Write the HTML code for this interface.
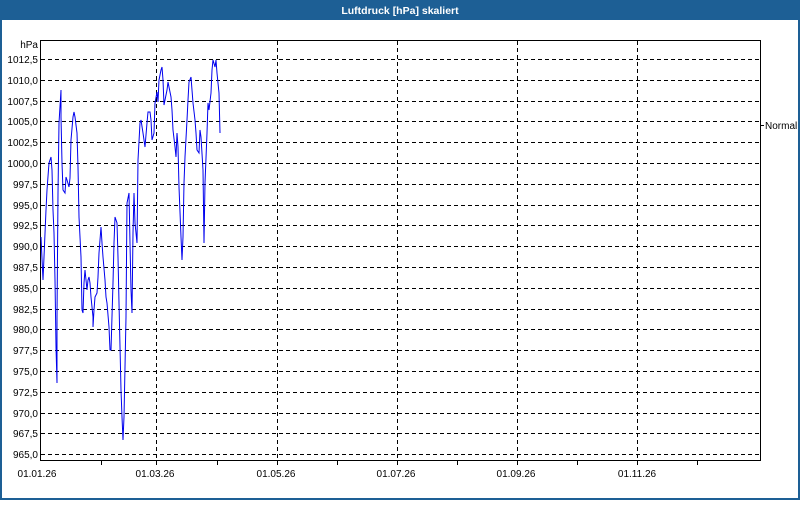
<!DOCTYPE html>
<html><head><style>
body{margin:0;width:800px;height:500px;overflow:hidden;background:#fff;font-family:"Liberation Sans",sans-serif}
</style></head><body>
<svg width="800" height="500" xmlns="http://www.w3.org/2000/svg" font-family="Liberation Sans, sans-serif" font-size="10">
<rect x="0" y="0" width="800" height="500" fill="#1d5f95"/>
<rect x="2" y="20" width="796" height="478" fill="#fff"/>
<text x="400" y="14" fill="#fff" font-weight="bold" font-size="10.5" text-anchor="middle">Luftdruck [hPa] skaliert</text>
<g stroke="#000" stroke-dasharray="4,3" stroke-width="1">
<line x1="41" x2="760" y1="59.5" y2="59.5"/><line x1="41" x2="760" y1="80.5" y2="80.5"/><line x1="41" x2="760" y1="101.5" y2="101.5"/><line x1="41" x2="760" y1="121.5" y2="121.5"/><line x1="41" x2="760" y1="142.5" y2="142.5"/><line x1="41" x2="760" y1="163.5" y2="163.5"/><line x1="41" x2="760" y1="184.5" y2="184.5"/><line x1="41" x2="760" y1="205.5" y2="205.5"/><line x1="41" x2="760" y1="225.5" y2="225.5"/><line x1="41" x2="760" y1="246.5" y2="246.5"/><line x1="41" x2="760" y1="267.5" y2="267.5"/><line x1="41" x2="760" y1="288.5" y2="288.5"/><line x1="41" x2="760" y1="309.5" y2="309.5"/><line x1="41" x2="760" y1="329.5" y2="329.5"/><line x1="41" x2="760" y1="350.5" y2="350.5"/><line x1="41" x2="760" y1="371.5" y2="371.5"/><line x1="41" x2="760" y1="392.5" y2="392.5"/><line x1="41" x2="760" y1="413.5" y2="413.5"/><line x1="41" x2="760" y1="433.5" y2="433.5"/><line x1="41" x2="760" y1="454.5" y2="454.5"/>
<line x1="156.5" x2="156.5" y1="41" y2="460"/><line x1="277.5" x2="277.5" y1="41" y2="460"/><line x1="397.5" x2="397.5" y1="41" y2="460"/><line x1="517.5" x2="517.5" y1="41" y2="460"/><line x1="637.5" x2="637.5" y1="41" y2="460"/>
</g>
<path d="M40.5 40.5H760.5V460.5H40.5Z" fill="none" stroke="#000"/>
<g stroke="#000"><line x1="101.5" x2="101.5" y1="460" y2="465"/><line x1="156.5" x2="156.5" y1="460" y2="465"/><line x1="217.5" x2="217.5" y1="460" y2="465"/><line x1="277.5" x2="277.5" y1="460" y2="465"/><line x1="337.5" x2="337.5" y1="460" y2="465"/><line x1="397.5" x2="397.5" y1="460" y2="465"/><line x1="457.5" x2="457.5" y1="460" y2="465"/><line x1="517.5" x2="517.5" y1="460" y2="465"/><line x1="577.5" x2="577.5" y1="460" y2="465"/><line x1="637.5" x2="637.5" y1="460" y2="465"/><line x1="697.5" x2="697.5" y1="460" y2="465"/><line x1="760" x2="764" y1="125.5" y2="125.5"/></g>
<polyline fill="none" stroke="#0000ee" stroke-width="1" points="41,237 43,280 44,257 46,210 47,190 49,163 51,157 52,170 53,210 54,233 55,280 56,347 57,383 57,317 58,193 59,123 61,90 61,117 62,163 63,190 65,193 66,177 67,180 69,187 70,178 71,140 73,117 74,112 75,117 77,133 78,167 79,217 81,257 82,310 83,313 84,283 85,270 87,290 88,280 89,277 90,283 91,297 93,317 93,327 94,310 95,297 97,293 98,277 99,253 101,227 102,243 103,257 105,280 106,297 107,303 109,327 110,350 111,350 113,283 114,243 115,217 117,223 118,257 119,303 121,390 122,417 123,440 124,417 125,367 126,317 127,203 129,193 130,243 131,290 132,313 133,233 134,193 135,223 137,243 138,160 140,123 141,120 143,133 144,140 145,147 147,123 148,112 150,112 151,120 152,140 154,133 155,103 157,92 158,102 159,80 161,70 162,67 163,80 164,105 165,100 167,90 168,82 169,87 171,97 172,110 173,130 175,147 176,157 177,133 178,147 179,187 181,237 182,260 183,237 184,183 185,157 187,120 188,100 189,82 191,77 192,90 193,103 195,120 196,133 197,150 199,153 200,130 201,137 203,170 204,243 205,183 207,133 208,103 209,110 211,93 212,70 213,60 215,67 216,60 217,73 219,93 220,133"/>
<g text-anchor="end" fill="#000">
<text x="38" y="48">hPa</text>
<text x="38" y="63">1012,5</text><text x="38" y="84">1010,0</text><text x="38" y="105">1007,5</text><text x="38" y="125">1005,0</text><text x="38" y="146">1002,5</text><text x="38" y="167">1000,0</text><text x="38" y="188">997,5</text><text x="38" y="209">995,0</text><text x="38" y="229">992,5</text><text x="38" y="250">990,0</text><text x="38" y="271">987,5</text><text x="38" y="292">985,0</text><text x="38" y="313">982,5</text><text x="38" y="333">980,0</text><text x="38" y="354">977,5</text><text x="38" y="375">975,0</text><text x="38" y="396">972,5</text><text x="38" y="417">970,0</text><text x="38" y="437">967,5</text><text x="38" y="458">965,0</text>
</g>
<g text-anchor="middle"><text x="37" y="477">01.01.26</text><text x="155" y="477">01.03.26</text><text x="276" y="477">01.05.26</text><text x="396" y="477">01.07.26</text><text x="516" y="477">01.09.26</text><text x="637" y="477">01.11.26</text></g>
<text x="765" y="129">Normal</text>
</svg>
</body></html>
